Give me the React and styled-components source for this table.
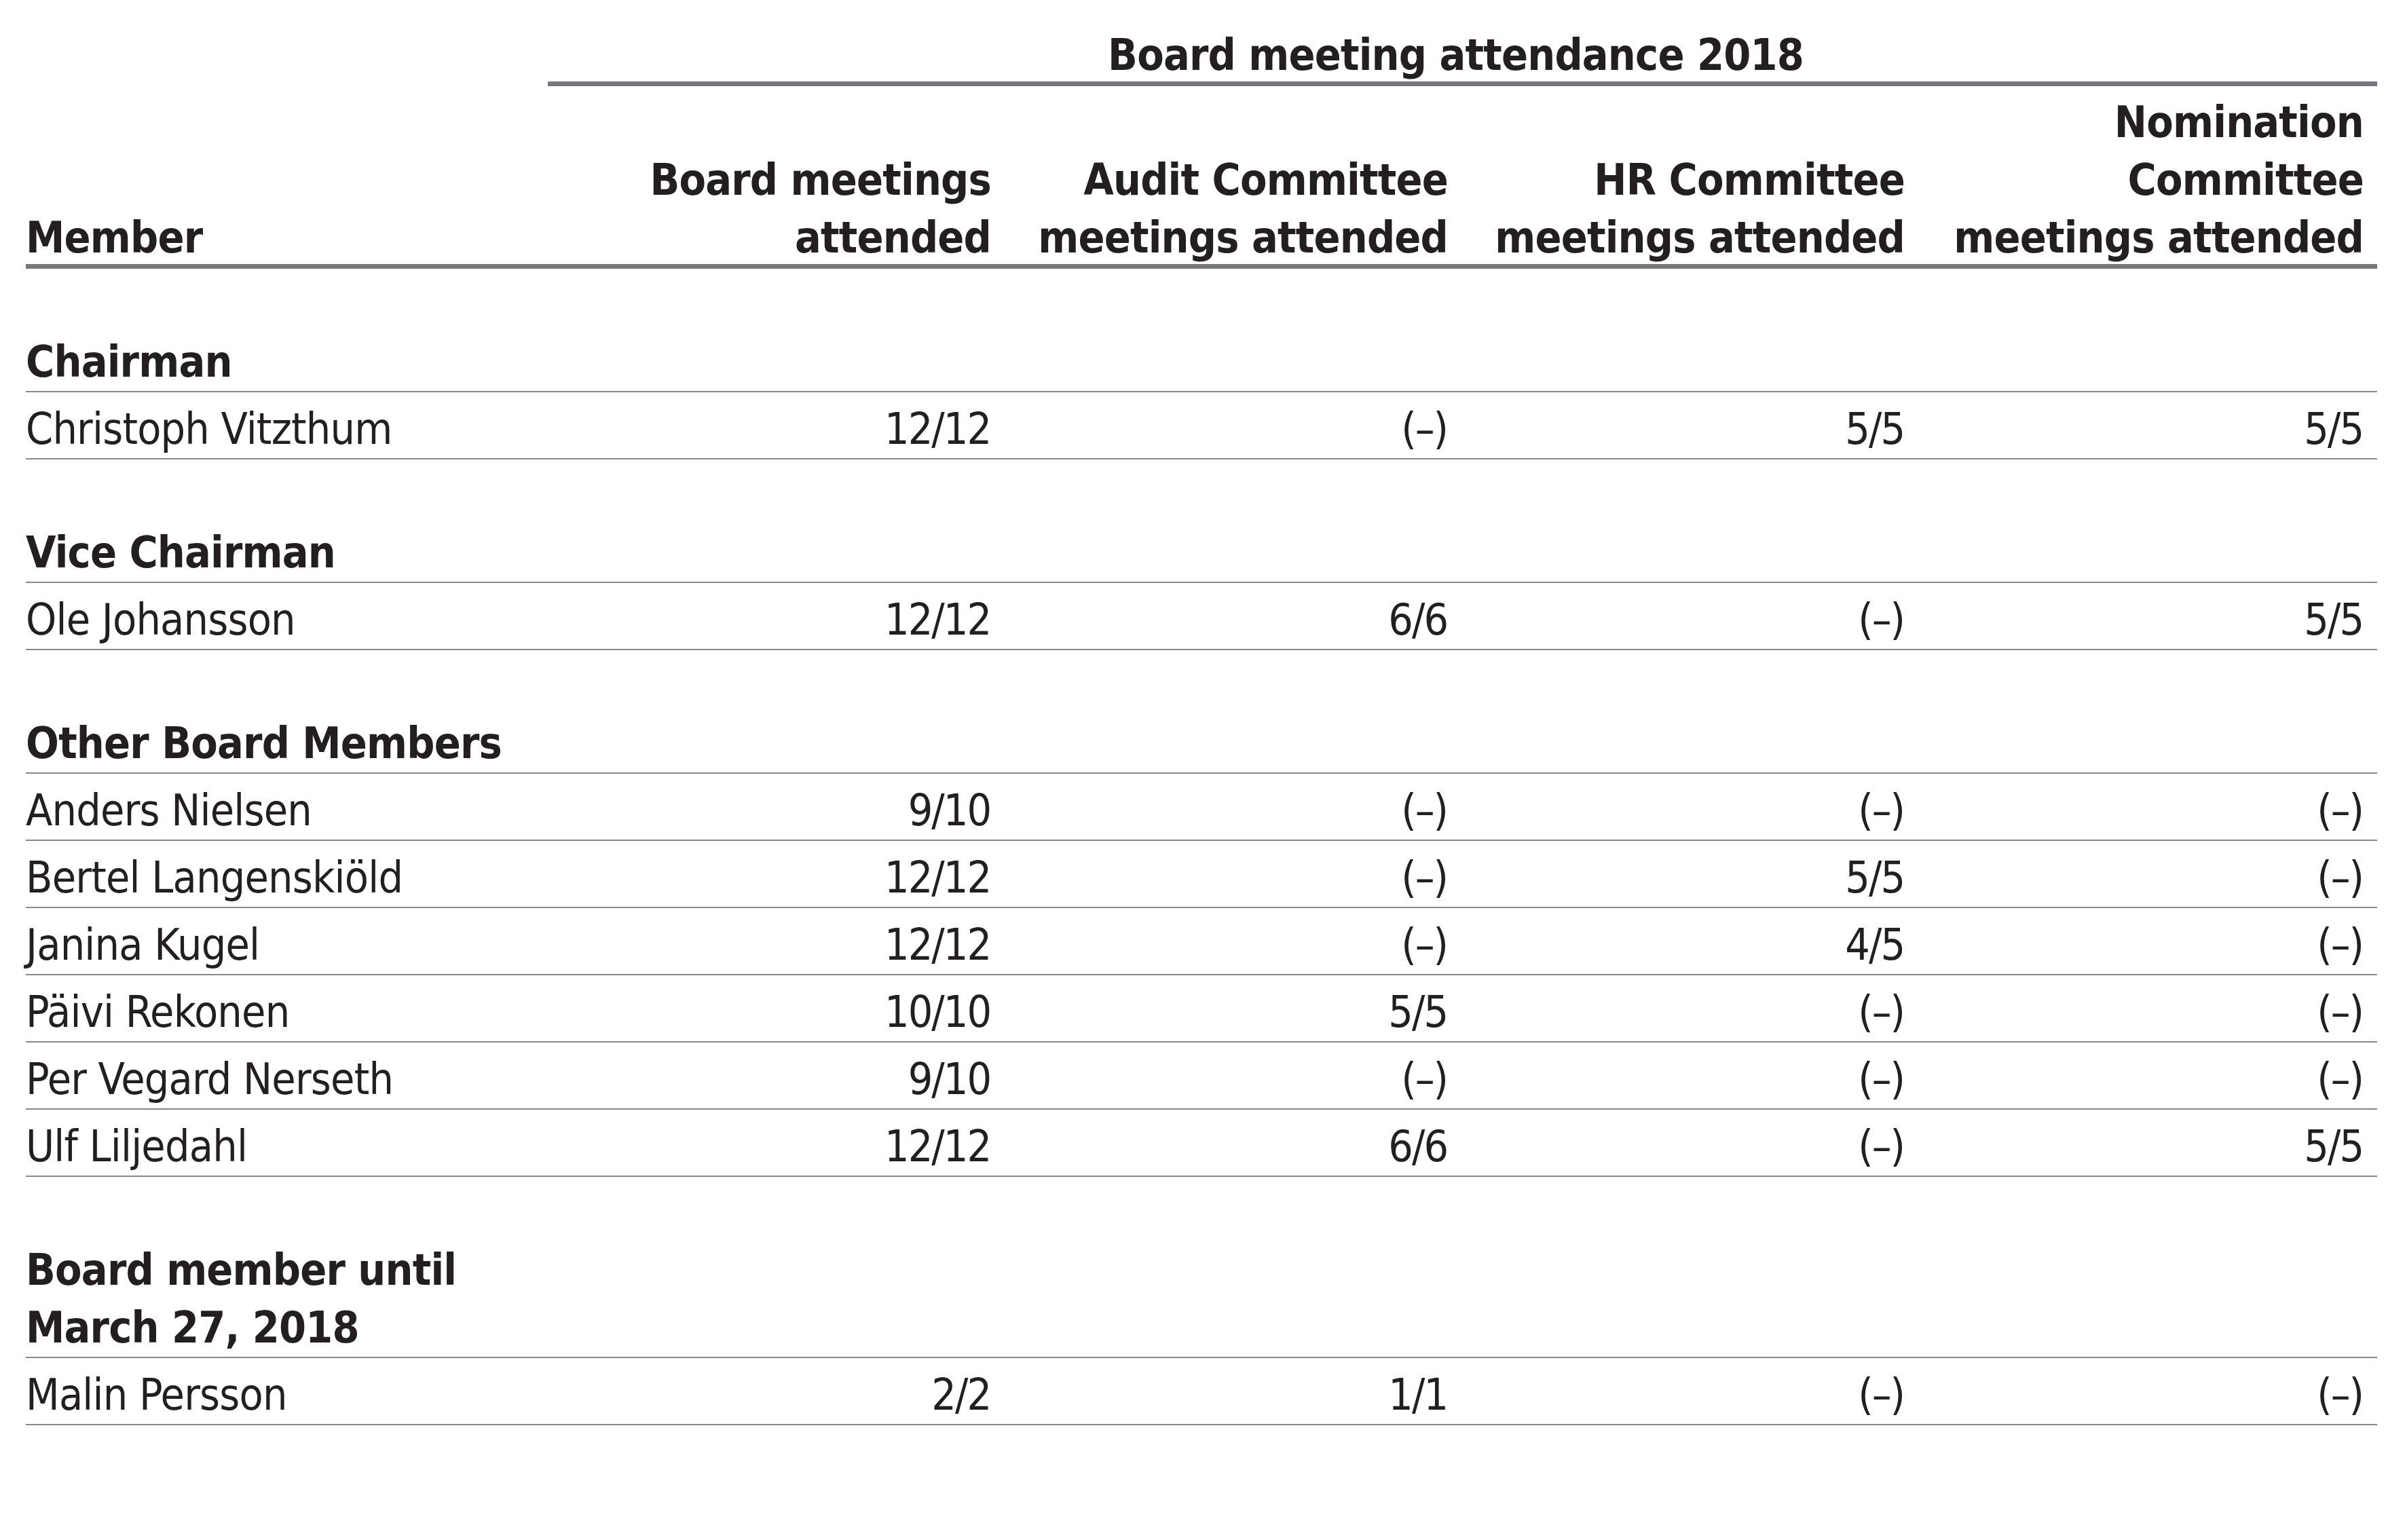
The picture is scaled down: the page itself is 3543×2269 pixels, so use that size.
import React from "react";
import styled, { createGlobalStyle } from "styled-components";

const Global = createGlobalStyle`
  html, body {
    margin: 0;
    padding: 0;
    background: #ffffff;
  }
  * { box-sizing: border-box; }
`;

const Page = styled.div`
  padding-left: 38px;
  font-family: "DejaVu Sans Condensed", "DejaVu Sans", sans-serif;
  font-stretch: condensed;
  font-size: 64px;
  color: #231f20;
`;

const Table = styled.table`
  border-collapse: separate;
  border-spacing: 0;
  table-layout: fixed;
  width: 3464px;
`;

const Col = styled.col`
  width: ${(p) => p.$w}px;
`;

const TitleCell = styled.th`
  padding: 43px 20px 0 0;
  line-height: 77px;
  font-weight: bold;
  text-align: center;
  border-bottom: 7px solid #77787b;
  letter-spacing: -0.8px;
`;

const HeadCell = styled.th`
  padding: ${(p) => (p.$first ? "0" : "0 20px 0 0")};
  line-height: 85px;
  height: 269px;
  vertical-align: bottom;
  font-weight: bold;
  text-align: ${(p) => (p.$first ? "left" : "right")};
  border-bottom: 7px solid #77787b;
  letter-spacing: -0.8px;
`;

const HeadText = styled.div`
  margin-bottom: -4px;
`;

const GroupCell = styled.td`
  padding: 95px 0 0 0;
  line-height: 85px;
  font-weight: bold;
  vertical-align: bottom;
  border-bottom: 2px solid #87888b;
  letter-spacing: -0.8px;
`;

const NameCell = styled.td`
  padding: 12px 0 0 0;
  line-height: 85px;
  vertical-align: top;
  border-bottom: 2px solid #87888b;
  letter-spacing: -0.8px;
`;

const ValueCell = styled.td`
  padding: 12px 21px 0 0;
  line-height: 85px;
  vertical-align: top;
  text-align: right;
  border-bottom: 2px solid #87888b;
  letter-spacing: -2px;
`;

const DASH = "(\u2013)";

const groups = [
  {
    label: ["Chairman"],
    rows: [["Christoph Vitzthum", "12/12", DASH, "5/5", "5/5"]],
  },
  {
    label: ["Vice Chairman"],
    rows: [["Ole Johansson", "12/12", "6/6", DASH, "5/5"]],
  },
  {
    label: ["Other Board Members"],
    rows: [
      ["Anders Nielsen", "9/10", DASH, DASH, DASH],
      ["Bertel Langenskiöld", "12/12", DASH, "5/5", DASH],
      ["Janina Kugel", "12/12", DASH, "4/5", DASH],
      ["Päivi Rekonen", "10/10", "5/5", DASH, DASH],
      ["Per Vegard Nerseth", "9/10", DASH, DASH, DASH],
      ["Ulf Liljedahl", "12/12", "6/6", DASH, "5/5"],
    ],
  },
  {
    label: ["Board member until", "March 27, 2018"],
    rows: [["Malin Persson", "2/2", "1/1", DASH, DASH]],
  },
];

const headers = [
  ["Board meetings", "attended"],
  ["Audit Committee", "meetings attended"],
  ["HR Committee", "meetings attended"],
  ["Nomination", "Committee", "meetings attended"],
];

const Lines = ({ lines }) =>
  lines.map((l, i) => (
    <React.Fragment key={i}>
      {i > 0 && <br />}
      {l}
    </React.Fragment>
  ));

export default function App() {
  return (
    <>
      <Global />
      <Page>
        <Table>
          <colgroup>
            <Col $w={769} />
            <Col $w={673} />
            <Col $w={673} />
            <Col $w={673} />
            <Col $w={676} />
          </colgroup>
          <thead>
            <tr>
              <th />
              <TitleCell colSpan={4}>Board meeting attendance 2018</TitleCell>
            </tr>
            <tr>
              <HeadCell $first>
                <HeadText>Member</HeadText>
              </HeadCell>
              {headers.map((h, i) => (
                <HeadCell key={i}>
                  <HeadText>
                    <Lines lines={h} />
                  </HeadText>
                </HeadCell>
              ))}
            </tr>
          </thead>
          <tbody>
            {groups.map((g, gi) => (
              <React.Fragment key={gi}>
                <tr>
                  <GroupCell colSpan={5}>
                    <Lines lines={g.label} />
                  </GroupCell>
                </tr>
                {g.rows.map((r, ri) => (
                  <tr key={ri}>
                    <NameCell>{r[0]}</NameCell>
                    {r.slice(1).map((v, vi) => (
                      <ValueCell key={vi}>{v}</ValueCell>
                    ))}
                  </tr>
                ))}
              </React.Fragment>
            ))}
          </tbody>
        </Table>
      </Page>
    </>
  );
}
